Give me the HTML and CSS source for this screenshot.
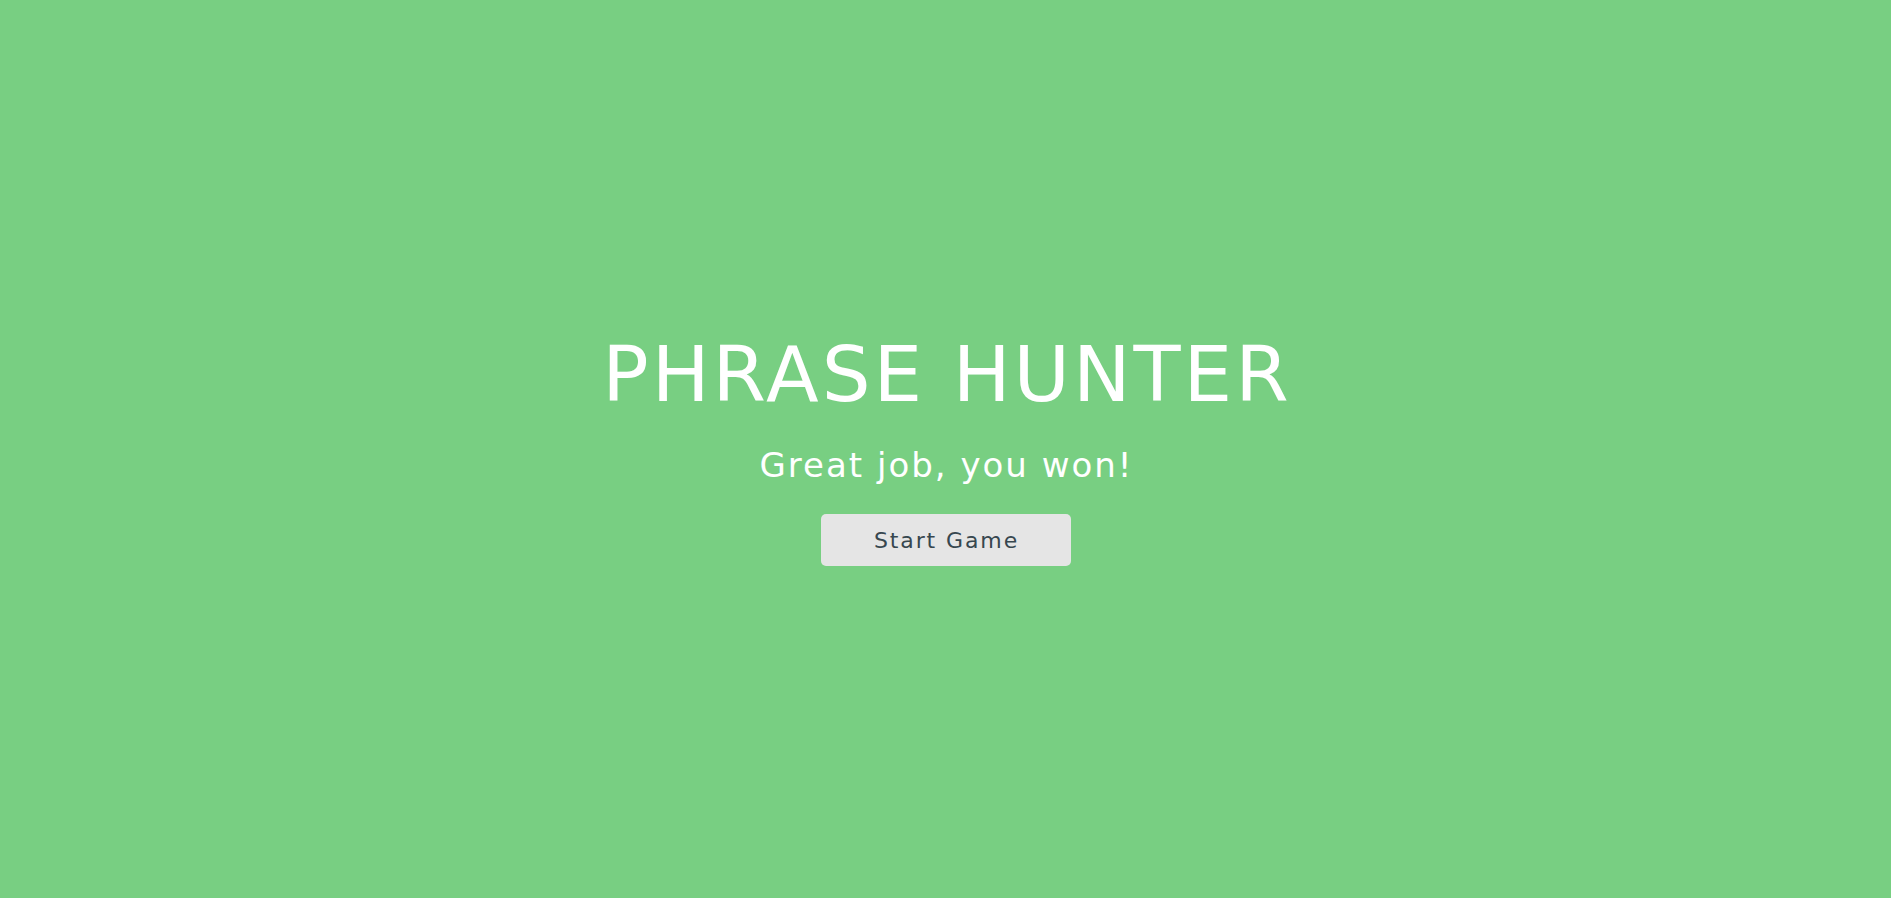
FILE: index.html
```html
<!DOCTYPE html>
<html lang="en">
<head>
<meta charset="utf-8">
<title>Phrase Hunter</title>
<link rel="stylesheet" href="styles.css">
</head>
<body>
<div class="overlay win">
  <h2 class="title">PHRASE HUNTER</h2>
  <h1 class="game-over-message">Great job, you won!</h1>
  <button class="btn-reset">Start Game</button>
</div>
</body>
</html>
```
FILE: styles.css
```css
html, body {
  margin: 0;
  padding: 0;
  height: 100%;
}
body {
  font-family: "DejaVu Sans", "Liberation Sans", sans-serif;
}
.overlay {
  box-sizing: border-box;
  height: 100vh;
  padding-top: 4px;
  display: flex;
  flex-direction: column;
  align-items: center;
  justify-content: center;
  color: #fff;
}
.win {
  background-color: #78cf82;
}
.title {
  margin: 0;
  padding-left: 3px;
  font-size: 77px;
  font-weight: normal;
  line-height: 1;
  letter-spacing: 3px;
}
.game-over-message {
  margin: 35px 0 0;
  padding-left: 2px;
  font-size: 34px;
  font-weight: normal;
  line-height: 1;
  letter-spacing: 2px;
}
.btn-reset {
  margin-top: 32px;
  width: 250px;
  height: 52px;
  padding: 0 0 0 2px;
  border: none;
  border-radius: 5px;
  background-color: #e5e5e5;
  color: #37474f;
  font-family: inherit;
  font-size: 22px;
  letter-spacing: 1.9px;
  cursor: pointer;
}
```
